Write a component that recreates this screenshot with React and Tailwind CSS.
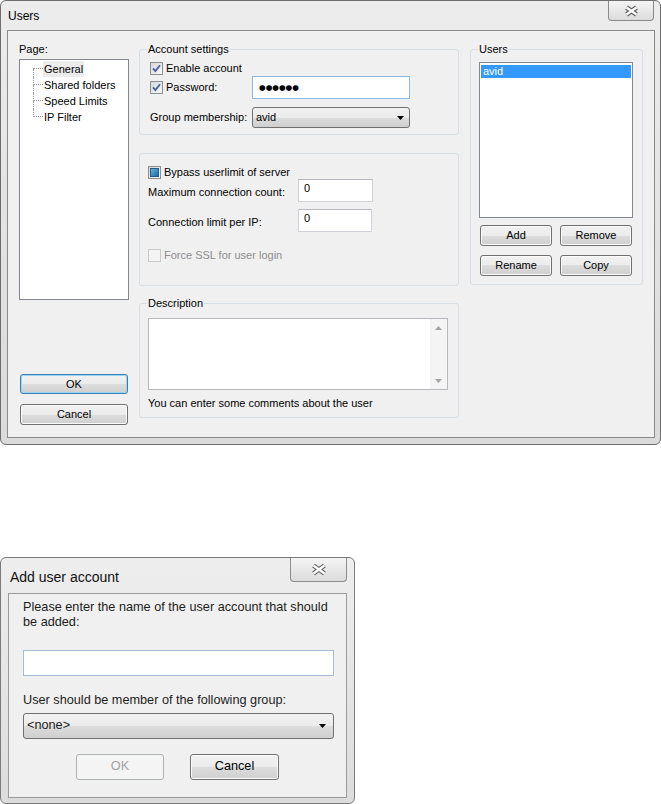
import React from 'react';

const face = 'bg-[linear-gradient(#f2f2f2,#ebebeb_50%,#dddddd_50%,#cfcfcf)]';

function Button({ label, className = '', focused = false, disabled = false }) {
  let skin = `border-[#707070] ${face} shadow-[inset_0_0_0_1px_#fbfbfb] text-black`;
  if (focused) skin = `border-[#3c7fb1] ${face} shadow-[inset_0_0_0_1px_#9bd4f5] text-black`;
  if (disabled) skin = 'border-[#adb2b5] bg-[#f4f4f4] text-[#a3a3a3]';
  return (
    <div className={`flex shrink-0 items-center justify-center rounded-[3px] border ${skin} ${className}`}>
      {label}
    </div>
  );
}

function Check({ state = 'on' }) {
  if (state === 'disabled') {
    return <span className="block h-[13px] w-[13px] shrink-0 border border-[#c9c9c9] bg-[#f4f4f4]" />;
  }
  return (
    <span className="flex h-[13px] w-[13px] shrink-0 items-center justify-center border border-[#8e8f8f] bg-[linear-gradient(135deg,#d4d8de,#f7f7f7)]">
      {state === 'on' && (
        <svg width="11" height="11" viewBox="0 0 11 11">
          <path d="M2 5.3 L4.4 8 L9 2.3" stroke="#4a5f97" strokeWidth="1.8" fill="none" />
        </svg>
      )}
      {state === 'mixed' && (
        <span className="block h-[9px] w-[9px] border border-[#245d8c] bg-[linear-gradient(135deg,#62b4de,#1d6aa5)]" />
      )}
    </span>
  );
}

function Group({ title, className = '', children }) {
  return (
    <div className={`flex flex-col rounded-[3px] border border-[#d5dfe5] ${className}`}>
      {title && (
        <span className="-mt-[7px] ml-[7px] self-start bg-[#f0f0f0] px-[1px] leading-[13px]">{title}</span>
      )}
      {children}
    </div>
  );
}

function CloseX({ w = 12, h = 9 }) {
  const d = `M2.5 2.5 L${w + 2.5} ${h + 2.5} M${w + 2.5} 2.5 L2.5 ${h + 2.5}`;
  return (
    <svg width={w + 5} height={h + 5} viewBox={`0 0 ${w + 5} ${h + 5}`}>
      <path d={d} stroke="#5a5a5a" strokeWidth="4.6" />
      <path d={d} stroke="#fff" strokeWidth="2.4" />
    </svg>
  );
}

function Arrow() {
  return (
    <svg width="7" height="4" viewBox="0 0 7 4">
      <path d="M0 0 L7 0 L3.5 4 Z" fill="#000" />
    </svg>
  );
}

const pages = ['General', 'Shared folders', 'Speed Limits', 'IP Filter'];

function TreeRow({ label, index }) {
  const first = index === 0;
  const last = index === pages.length - 1;
  return (
    <div className="flex h-[16px]">
      <div className="ml-[13px] flex w-[10px] flex-col">
        <div className={first ? 'h-[8px] border-b border-dotted border-[#9a9a9a]' : 'h-[8px] border-b border-l border-dotted border-[#9a9a9a]'} />
        <div className={last ? 'h-[8px]' : 'h-[8px] border-l border-dotted border-[#9a9a9a]'} />
      </div>
      <span className={first ? 'bg-[#ececec] px-[1px] leading-[16px]' : 'px-[1px] leading-[16px]'}>{label}</span>
    </div>
  );
}

function UsersWindow() {
  return (
    <div className="flex h-[445px] w-[661px] flex-col rounded-[6px] border border-[#6e6e6e] bg-[linear-gradient(#ececec,#dadada)]">
      <div className="flex h-[29px] shrink-0 items-start justify-between">
        <span className="ml-[7px] mt-[8px] text-[12px] leading-[14px]">Users</span>
        <div className="mr-[6px] flex h-[20px] w-[46px] items-center justify-center rounded-b-[4px] border border-t-0 border-[#8a8a8a] bg-[linear-gradient(#f4f4f4,#dcdcdc)]">
          <CloseX w={10} h={7} />
        </div>
      </div>

      <div className="ml-[6px] flex h-[408px] w-[648px] border border-[#8a8a8a] bg-[#f0f0f0] pl-[11px] pt-[12px] text-[11px]">
        {/* page tree + dialog buttons */}
        <div className="flex w-[110px] flex-col">
          <span className="leading-[13px]">Page:</span>
          <div className="mt-[3px] h-[241px] border border-[#828790] bg-white pt-[1px]">
            {pages.map((p, i) => (
              <TreeRow key={p} label={p} index={i} />
            ))}
          </div>
          <Button label="OK" focused className="mx-[1px] mt-[74px] h-[20px]" />
          <Button label="Cancel" className="mx-[1px] mt-[10px] h-[21px]" />
        </div>

        <div className="ml-[10px] flex w-[320px] flex-col">
          <Group title="Account settings" className="mt-[6px] h-[86px]">
            <div className="ml-[10px] mt-[5px] flex h-[14px] items-center gap-[3px]">
              <Check />
              <span>Enable account</span>
            </div>
            <div className="ml-[10px] mt-[1px] flex h-[23px] items-center">
              <div className="flex w-[102px] items-center gap-[3px]">
                <Check />
                <span>Password:</span>
              </div>
              <div className="flex h-[23px] w-[158px] items-center border border-[#8fb8e0] bg-white pl-[6px] font-['DejaVu_Sans',sans-serif] text-[7.6px]">
                ●●●●●●
              </div>
            </div>
            <div className="ml-[10px] mt-[8px] flex h-[21px] items-center">
              <span className="w-[102px]">Group membership:</span>
              <div className={`flex h-[21px] w-[158px] items-center justify-between rounded-[3px] border border-[#707070] ${face} pl-[3px] pr-[5px]`}>
                <span>avid</span>
                <Arrow />
              </div>
            </div>
          </Group>

          <Group className="mt-[18px] h-[133px]">
            <div className="ml-[8px] mt-[11px] flex h-[14px] items-center gap-[3px]">
              <Check state="mixed" />
              <span>Bypass userlimit of server</span>
            </div>
            <div className="ml-[8px] flex h-[23px] items-center">
              <span className="w-[150px] pt-[3px]">Maximum connection count:</span>
              <div className="h-[23px] w-[75px] border border-[#cfd2d8] border-t-[#b5b8be] bg-white pl-[5px] pt-[2px] leading-[13px]">0</div>
            </div>
            <div className="ml-[8px] mt-[7px] flex h-[23px] items-center">
              <span className="w-[150px] pt-[3px]">Connection limit per IP:</span>
              <div className="h-[23px] w-[74px] border border-[#cfd2d8] border-t-[#b5b8be] bg-white pl-[5px] pt-[2px] leading-[13px]">0</div>
            </div>
            <div className="ml-[8px] mt-[16px] flex h-[14px] items-center gap-[3px] text-[#8d8d8d]">
              <Check state="disabled" />
              <span>Force SSL for user login</span>
            </div>
          </Group>

          <Group title="Description" className="mt-[17px] h-[115px]">
            <div className="ml-[8px] mt-[8px] flex h-[72px] w-[300px] justify-end border border-[#b5b8bd] bg-white">
              <div className="flex w-[17px] flex-col justify-between bg-[#f4f4f4]">
                <div className="flex h-[17px] items-center justify-center">
                  <svg width="7" height="4" viewBox="0 0 7 4"><path d="M0 4 L3.5 0 L7 4 Z" fill="#a3a3a3" /></svg>
                </div>
                <div className="flex h-[17px] items-center justify-center">
                  <svg width="7" height="4" viewBox="0 0 7 4"><path d="M0 0 L7 0 L3.5 4 Z" fill="#a3a3a3" /></svg>
                </div>
              </div>
            </div>
            <span className="ml-[8px] mt-[7px] leading-[13px]">You can enter some comments about the user</span>
          </Group>
        </div>

        <div className="ml-[11px] flex w-[173px] flex-col">
          <Group title="Users" className="mt-[6px] h-[236px]">
            <div className="ml-[8px] mt-[6px] h-[156px] w-[154px] border border-[#828790] bg-white px-[1px] pt-[2px]">
              <div className="h-[13px] bg-[#3399ff] pl-[2px] leading-[13px] text-white">avid</div>
            </div>
            <div className="ml-[9px] mt-[7px] flex gap-[8px]">
              <Button label="Add" className="h-[21px] w-[72px]" />
              <Button label="Remove" className="h-[21px] w-[72px]" />
            </div>
            <div className="ml-[9px] mt-[9px] flex gap-[8px]">
              <Button label="Rename" className="h-[21px] w-[72px]" />
              <Button label="Copy" className="h-[21px] w-[72px]" />
            </div>
          </Group>
        </div>
      </div>
    </div>
  );
}

function AddUserDialog() {
  return (
    <div className="mt-[112px] flex h-[247px] w-[355px] flex-col rounded-[6px] border border-[#7b7b7b] bg-[linear-gradient(#eeeeee,#dcdcdc)]">
      <div className="flex h-[35px] shrink-0 items-start justify-between">
        <span className="ml-[9px] mt-[11px] text-[14px] leading-[16px] text-[#111]">Add user account</span>
        <div className="mr-[7px] flex h-[24px] w-[57px] items-center justify-center rounded-b-[4px] border border-t-0 border-[#8c8c8c] bg-[linear-gradient(#f4f4f4,#dcdcdc)]">
          <CloseX w={11} h={8} />
        </div>
      </div>
      <div className="ml-[7px] flex h-[205px] w-[339px] flex-col border border-[#9a9a9a] bg-[#f0f0f0] pl-[14px] pt-[6px] text-[12.7px] text-[#1c1c1c]">
        <p className="w-[311px] leading-[15px]">Please enter the name of the user account that should be added:</p>
        <div className="mt-[20px] h-[26px] w-[311px] border border-[#a7bcd4] bg-white" />
        <p className="mt-[17px] leading-[15px]">User should be member of the following group:</p>
        <div className={`mt-[5px] flex h-[26px] w-[311px] items-center justify-between rounded-[3px] border border-[#707070] ${face} pl-[3px] pr-[7px]`}>
          <span>&lt;none&gt;</span>
          <Arrow />
        </div>
        <div className="ml-[53px] mt-[15px] flex gap-[26px]">
          <Button label="OK" disabled className="h-[26px] w-[88px]" />
          <Button label="Cancel" className="h-[26px] w-[89px]" />
        </div>
      </div>
    </div>
  );
}

export default function App() {
  return (
    <div className="flex h-[804px] w-[661px] flex-col overflow-hidden bg-white font-['Liberation_Sans',Arial,sans-serif] text-black">
      <UsersWindow />
      <AddUserDialog />
    </div>
  );
}
